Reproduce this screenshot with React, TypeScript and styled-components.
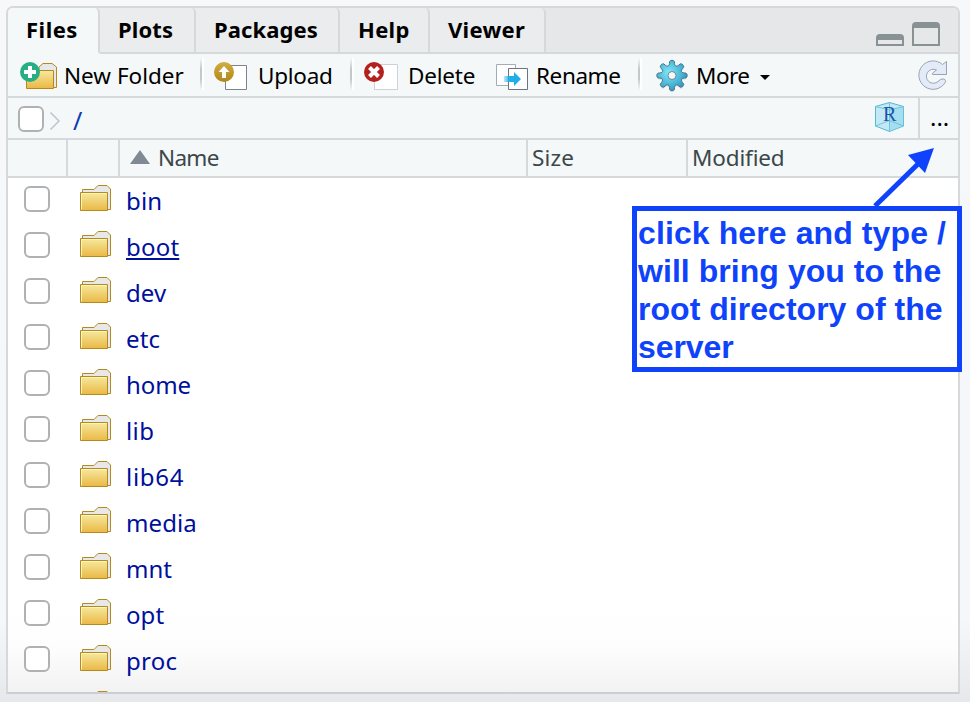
import React from "react";
import styled, { createGlobalStyle } from "styled-components";

const Global = createGlobalStyle`
  * { box-sizing: border-box; }
  body { margin: 0; background: #f5f7fa; overflow: hidden; font-family: "Noto Sans", "Open Sans", sans-serif; }
`;

const Page = styled.div`
  position: relative;
  width: 970px;
  height: 702px;
  padding: 6px 10px 8px 6px;
  background: linear-gradient(#f6f8fa 0, #f5f7fa 620px, #e7e8eb 702px);
`;

const Panel = styled.section`
  display: flex;
  flex-direction: column;
  height: 688px;
  border: 2px solid #d5d9db;
  border-bottom-color: #cbcfd2;
  border-radius: 7px 7px 0 0;
  overflow: hidden;
  background: #fff;
`;

const Tabs = styled.nav`
  display: flex;
  flex: none;
  height: 46px;
  background: #e6e7e9;
`;

const Tab = styled.div<{ $w: number; $active?: boolean; $ls?: number }>`
  width: ${(p) => p.$w}px;
  height: 46px;
  padding-left: 18px;
  border-right: 2px solid #d5d9db;
  border-bottom: 2px solid ${(p) => (p.$active ? "#f4f8f9" : "#d5d9db")};
  border-top-right-radius: 5px;
  background: ${(p) => (p.$active ? "#f4f8f9" : "#ebecee")};
  color: #000;
  font-size: 22px;
  font-weight: 700;
  line-height: 42px;
  letter-spacing: ${(p) => p.$ls ?? 0}px;
  white-space: nowrap;
`;

const TabFill = styled.div`
  display: flex;
  flex: 1;
  justify-content: flex-end;
  gap: 8px;
  padding: 14px 18px 0 0;
  border-bottom: 2px solid #d5d9db;
`;

const WindowIcon = styled.span<{ $h: number }>`
  align-self: flex-start;
  width: 28px;
  height: ${(p) => p.$h}px;
  margin-top: ${(p) => 24 - p.$h}px;
  border: 2px solid #889194;
  border-top-width: 6px;
  border-radius: 4px 4px 0 0;
`;

const Toolbar = styled.div`
  display: flex;
  flex: none;
  height: 44px;
  background: #f4f8f9;
  border-bottom: 2px solid #d5d9db;
`;

const Tool = styled.div<{ $w: number; $icon: number; $ls?: number }>`
  display: grid;
  grid-template-columns: ${(p) => p.$icon}px auto;
  justify-content: start;
  width: ${(p) => p.$w}px;
  height: 42px;
  color: #000;
  font-size: 22.5px;
  line-height: 43px;
  letter-spacing: ${(p) => p.$ls ?? 0}px;
  white-space: nowrap;
  svg { display: block; justify-self: start; }
`;

const Separator = styled.div`
  width: 4px;
  height: 32px;
  margin-top: 4px;
  border-right: 2px solid #fff;
  background: linear-gradient(#f4f8f9, #c4c8ca 35%, #c4c8ca 65%, #f4f8f9);
`;

const Caret = styled.i`
  display: inline-block;
  margin-left: 10px;
  vertical-align: 4px;
  border: 5px solid transparent;
  border-top-color: #000;
  border-bottom: 0;
`;

const MoreLabel = styled.span`
  white-space: nowrap;
`;

const PathBar = styled.div`
  display: flex;
  flex: none;
  height: 42px;
  background: #f4f8f9;
  border-bottom: 2px solid #d5d9db;
`;

const Check = styled.span<{ $top: number; $left: number }>`
  flex: none;
  width: 26px;
  height: 26px;
  margin: ${(p) => p.$top}px 0 0 ${(p) => p.$left}px;
  border: 2px solid #b0b1b2;
  border-radius: 6px;
  background: #fff;
`;

const Slash = styled.span`
  margin-left: 11px;
  color: #0d3cb5;
  font-size: 25px;
  line-height: 45px;
`;

const Spacer = styled.span`
  flex: 1;
`;

const Ellipsis = styled.div`
  width: 40px;
  padding-left: 10px;
  border-left: 2px solid #d5d9db;
  color: #000;
  font-size: 24px;
  line-height: 38px;
`;

const Header = styled.div`
  display: grid;
  flex: none;
  grid-template-columns: 60px 52px 408px 160px 1fr;
  height: 38px;
  background: #f4f8f9;
  border-bottom: 2px solid #d5d9db;
`;

const HeadCell = styled.div<{ $pad?: number; $last?: boolean; $ls?: number }>`
  display: flex;
  align-items: center;
  padding-left: ${(p) => p.$pad ?? 4}px;
  border-right: ${(p) => (p.$last ? 0 : 2)}px solid #d5d9db;
  color: #3c474a;
  font-size: 22.5px;
  line-height: 36px;
  letter-spacing: ${(p) => p.$ls ?? 0}px;
`;

const SortMark = styled.i`
  width: 0;
  margin: -2px 8px 0 0;
  border: 10px solid transparent;
  border-top: 0;
  border-bottom: 14px solid #808996;
`;

const List = styled.div`
  flex: 1;
  min-height: 0;
  overflow: hidden;
  background: linear-gradient(#fff 430px, #fdfdfd 470px, #f3f2f2 514px);
`;

const Row = styled.div`
  display: flex;
  height: 46px;
  svg { flex: none; margin: 6px 0 0 30px; }
`;

const Name = styled.span<{ $underline?: boolean; $ls?: number }>`
  margin-left: 15px;
  color: #000f9c;
  font-size: 24px;
  line-height: 45px;
  letter-spacing: ${(p) => p.$ls ?? 0}px;
  text-decoration: ${(p) => (p.$underline ? "underline" : "none")};
  text-decoration-thickness: 2px;
  text-underline-offset: 2px;
`;

const Callout = styled.aside`
  position: absolute;
  left: 632px;
  top: 206px;
  width: 330px;
  height: 166px;
  padding: 3px 0 0 1px;
  border: 5px solid #0f43fb;
  background: #fff;
  color: #0f43fb;
  font: 700 32px/38px "Liberation Sans", Arial, sans-serif;
  white-space: nowrap;
`;

const Line = styled.div<{ $ls: number }>`
  letter-spacing: ${(p) => p.$ls}px;
`;

const Arrow = styled.svg`
  position: absolute;
  left: 870px;
  top: 144px;
`;

const HiddenDefs = styled.svg`
  display: block;
  width: 0;
  height: 0;
`;

const FolderIcon = () => (
  <svg width="31" height="28" viewBox="0 0 31 28">
    <path d="M2.5 8V5.5H14L18 1.5H27L30.5 5V25.5H27" fill="#e8e8e8" stroke="#b28a1e" />
    <path d="M.5 8.5H27.5V26.5H.5Z" fill="url(#folderFront)" stroke="#b28a1e" />
    <path d="M1.5 25.5V9.5H26.5" fill="none" stroke="#fff4b9" />
  </svg>
);

const NewFolderIcon = () => (
  <svg width="57" height="42" viewBox="0 0 57 42">
    <path d="M31 16V13L35 9.5H44L48.5 13V33.5H46" fill="#e6e8e9" stroke="#b28a1e" />
    <path d="M18.5 16.5H45.5V34.5H18.5Z" fill="url(#folderFront)" stroke="#b28a1e" />
    <circle cx="22" cy="18" r="10" fill="#27ae85" />
    <path d="M22 12V24M16 18H28" stroke="#fff" strokeWidth="4" />
  </svg>
);

const UploadIcon = () => (
  <svg width="48" height="42" viewBox="-6 0 48 42">
    <path d="M15.5 11.5H36.5V35.5H15.5Z" fill="#fff" stroke="#7b838e" />
    <circle cx="14" cy="18" r="10" fill="url(#gold)" />
    <path d="M14 12L19.5 18H16V24H12V18H8.5Z" fill="#fff" />
  </svg>
);

const DeleteIcon = () => (
  <svg width="48" height="42" viewBox="-6 0 48 42">
    <path d="M14.5 10.5H37.5V35.5H14.5Z" fill="#fff" stroke="#cbd2d9" />
    <circle cx="14" cy="18" r="10" fill="#b4201e" />
    <path d="M9.5 13.5L18.5 22.5M18.5 13.5L9.5 22.5" stroke="#fff" strokeWidth="4" />
  </svg>
);

const RenameIcon = () => (
  <svg width="42" height="42" viewBox="-6 0 42 42">
    <path d="M2.5 10.5H21.5V31.5H2.5Z" fill="#fff" stroke="#a3acb6" />
    <path d="M14.5 14.5H33.5V35.5H14.5Z" fill="#fff" stroke="#6c7480" />
    <path d="M10 22H20V18L27 25L20 32V28H10Z" fill="url(#arrowBlue)" />
  </svg>
);

/* Eight rounded teeth joined by scooped valleys. */
const gearPath = (() => {
  const pt = (r: number, deg: number) => {
    const a = ((deg - 90) * Math.PI) / 180;
    return `${(r * Math.cos(a)).toFixed(2)} ${(r * Math.sin(a)).toFixed(2)}`;
  };
  let d = `M${pt(14, -10)}`;
  for (let i = 0; i < 8; i++) {
    const c = i * 45;
    d += `C${pt(15.8, c - 7)} ${pt(15.8, c + 7)} ${pt(14, c + 10)}C${pt(9.2, c + 15)} ${pt(9.2, c + 30)} ${pt(14, c + 35)}`;
  }
  return d + "Z";
})();

const GearIcon = () => (
  <svg width="54" height="42" viewBox="-12 0 54 42">
    <g transform="translate(18 21.5)">
      <path d={gearPath} fill="#9ba9b0" opacity=".35" transform="translate(0 1.5)" />
      <path d={gearPath} fill="url(#gearFill)" stroke="#47738c" strokeLinejoin="round" />
      <circle r="4" fill="#f4f8f9" stroke="#6b8798" />
    </g>
  </svg>
);

const RefreshIcon = () => (
  <svg width="40" height="42" viewBox="4 0 40 42">
    <path
      d="M28.5 10.5L32.5 7.5V20.5H18.5V19.2L22.5 16A7 7 0 1 0 24 27.5Q27 24 30.3 25Q32.3 26.5 31.2 28.5A14.2 14.2 0 1 1 28.5 10.5Z"
      fill="#e4ebf8"
      stroke="#9aa3b3"
      strokeLinejoin="round"
    />
  </svg>
);

const CubeIcon = () => (
  <svg width="44" height="40" viewBox="0 0 44 40">
    <path d="M1.5 8.5L15.5 4.5L29.5 8.5V28L15.5 33.5L1.5 28Z" fill="#c3e9f6" stroke="#58b6cf" />
    <path d="M15.5 12L29.5 8.5V28L15.5 33.5Z" fill="#91d5ef" opacity=".6" />
    <path d="M1.5 8.5L15.5 12L29.5 8.5M15.5 12V33.5M1.5 28L15.5 22.5L29.5 28M15.5 4.5V12" fill="none" stroke="#6ac0d6" strokeWidth=".9" />
    <text x="9" y="23" fontFamily="Liberation Serif" fontSize="20" fill="#1c55a8">R</text>
  </svg>
);

const Chevron = () => (
  <svg width="18" height="40" viewBox="0 0 18 40">
    <path d="M6.5 14.5L15 23L6.5 31.5" fill="none" stroke="#bfc5cd" strokeWidth="1.5" />
  </svg>
);

const Defs = () => (
  <HiddenDefs>
    <defs>
      <linearGradient id="folderFront" x1="0" y1="0" x2="0" y2="1">
        <stop stopColor="#f5e9a0" />
        <stop offset="1" stopColor="#ebb844" />
      </linearGradient>
      <linearGradient id="gold" x1="0" y1="0" x2="0" y2="1">
        <stop stopColor="#d2ad42" />
        <stop offset="1" stopColor="#b38618" />
      </linearGradient>
      <linearGradient id="arrowBlue" gradientUnits="userSpaceOnUse" x1="9" y1="0" x2="16" y2="0">
        <stop stopColor="#20aeea" stopOpacity=".2" />
        <stop offset="1" stopColor="#20aeea" />
      </linearGradient>
      <radialGradient id="gearFill" cx=".4" cy=".4" r=".6">
        <stop stopColor="#7fe9f8" />
        <stop offset="1" stopColor="#329dc4" />
      </radialGradient>
    </defs>
  </HiddenDefs>
);

const entries: [string, number][] = [
  ["bin", 0.2], ["boot", 0.2], ["dev", 0.1], ["etc", 0.1], ["home", -0.1], ["lib", 0.4],
  ["lib64", 0.7], ["media", 0.1], ["mnt", 0], ["opt", 0.1], ["proc", 0.3],
];

export default function App() {
  return (
    <Page>
      <Global />
      <Defs />
      <Panel>
        <Tabs>
          <Tab $w={92} $active $ls={0.5}>Files</Tab>
          <Tab $w={96} $ls={0.1}>Plots</Tab>
          <Tab $w={144} $ls={0.1}>Packages</Tab>
          <Tab $w={90} $ls={0.3}>Help</Tab>
          <Tab $w={116} $ls={0.3}>Viewer</Tab>
          <TabFill>
            <WindowIcon $h={12} />
            <WindowIcon $h={24} />
          </TabFill>
        </Tabs>
        <Toolbar>
          <Tool $w={192} $icon={56} $ls={0}><NewFolderIcon />New Folder</Tool>
          <Separator />
          <Tool $w={146} $icon={54} $ls={-0.25}><UploadIcon />Upload</Tool>
          <Separator />
          <Tool $w={134} $icon={54} $ls={-0.2}><DeleteIcon />Delete</Tool>
          <Tool $w={150} $icon={48} $ls={-0.4}><RenameIcon />Rename</Tool>
          <Separator />
          <Tool $w={200} $icon={54} $ls={-0.5}><GearIcon /><MoreLabel>More<Caret /></MoreLabel></Tool>
          <Spacer />
          <RefreshIcon />
        </Toolbar>
        <PathBar>
          <Check $top={8} $left={10} />
          <Chevron />
          <Slash>/</Slash>
          <Spacer />
          <CubeIcon />
          <Ellipsis>...</Ellipsis>
        </PathBar>
        <Header>
          <HeadCell />
          <HeadCell />
          <HeadCell $pad={10} $ls={-0.7}><SortMark />Name</HeadCell>
          <HeadCell $ls={0.2}>Size</HeadCell>
          <HeadCell $last $ls={-0.15}>Modified</HeadCell>
        </Header>
        <List>
          {entries.map(([name, ls]) => (
            <Row key={name}>
              <Check $top={8} $left={16} />
              <FolderIcon />
              <Name $underline={name === "boot"} $ls={ls}>{name}</Name>
            </Row>
          ))}
          <Row>
            <Check $top={8} $left={16} />
            <FolderIcon />
          </Row>
        </List>
      </Panel>
      <Callout>
        <Line $ls={0.1}>click here and type /</Line>
        <Line $ls={0.05}>will bring you to the</Line>
        <Line $ls={0.03}>root directory of the</Line>
        <Line $ls={-0.1}>server</Line>
      </Callout>
      <Arrow width="70" height="64" viewBox="0 0 70 64">
        <path d="M5 62L48 20" stroke="#0f43fb" strokeWidth="5" />
        <path d="M64 4L38 11L55 29Z" fill="#0f43fb" />
      </Arrow>
    </Page>
  );
}
